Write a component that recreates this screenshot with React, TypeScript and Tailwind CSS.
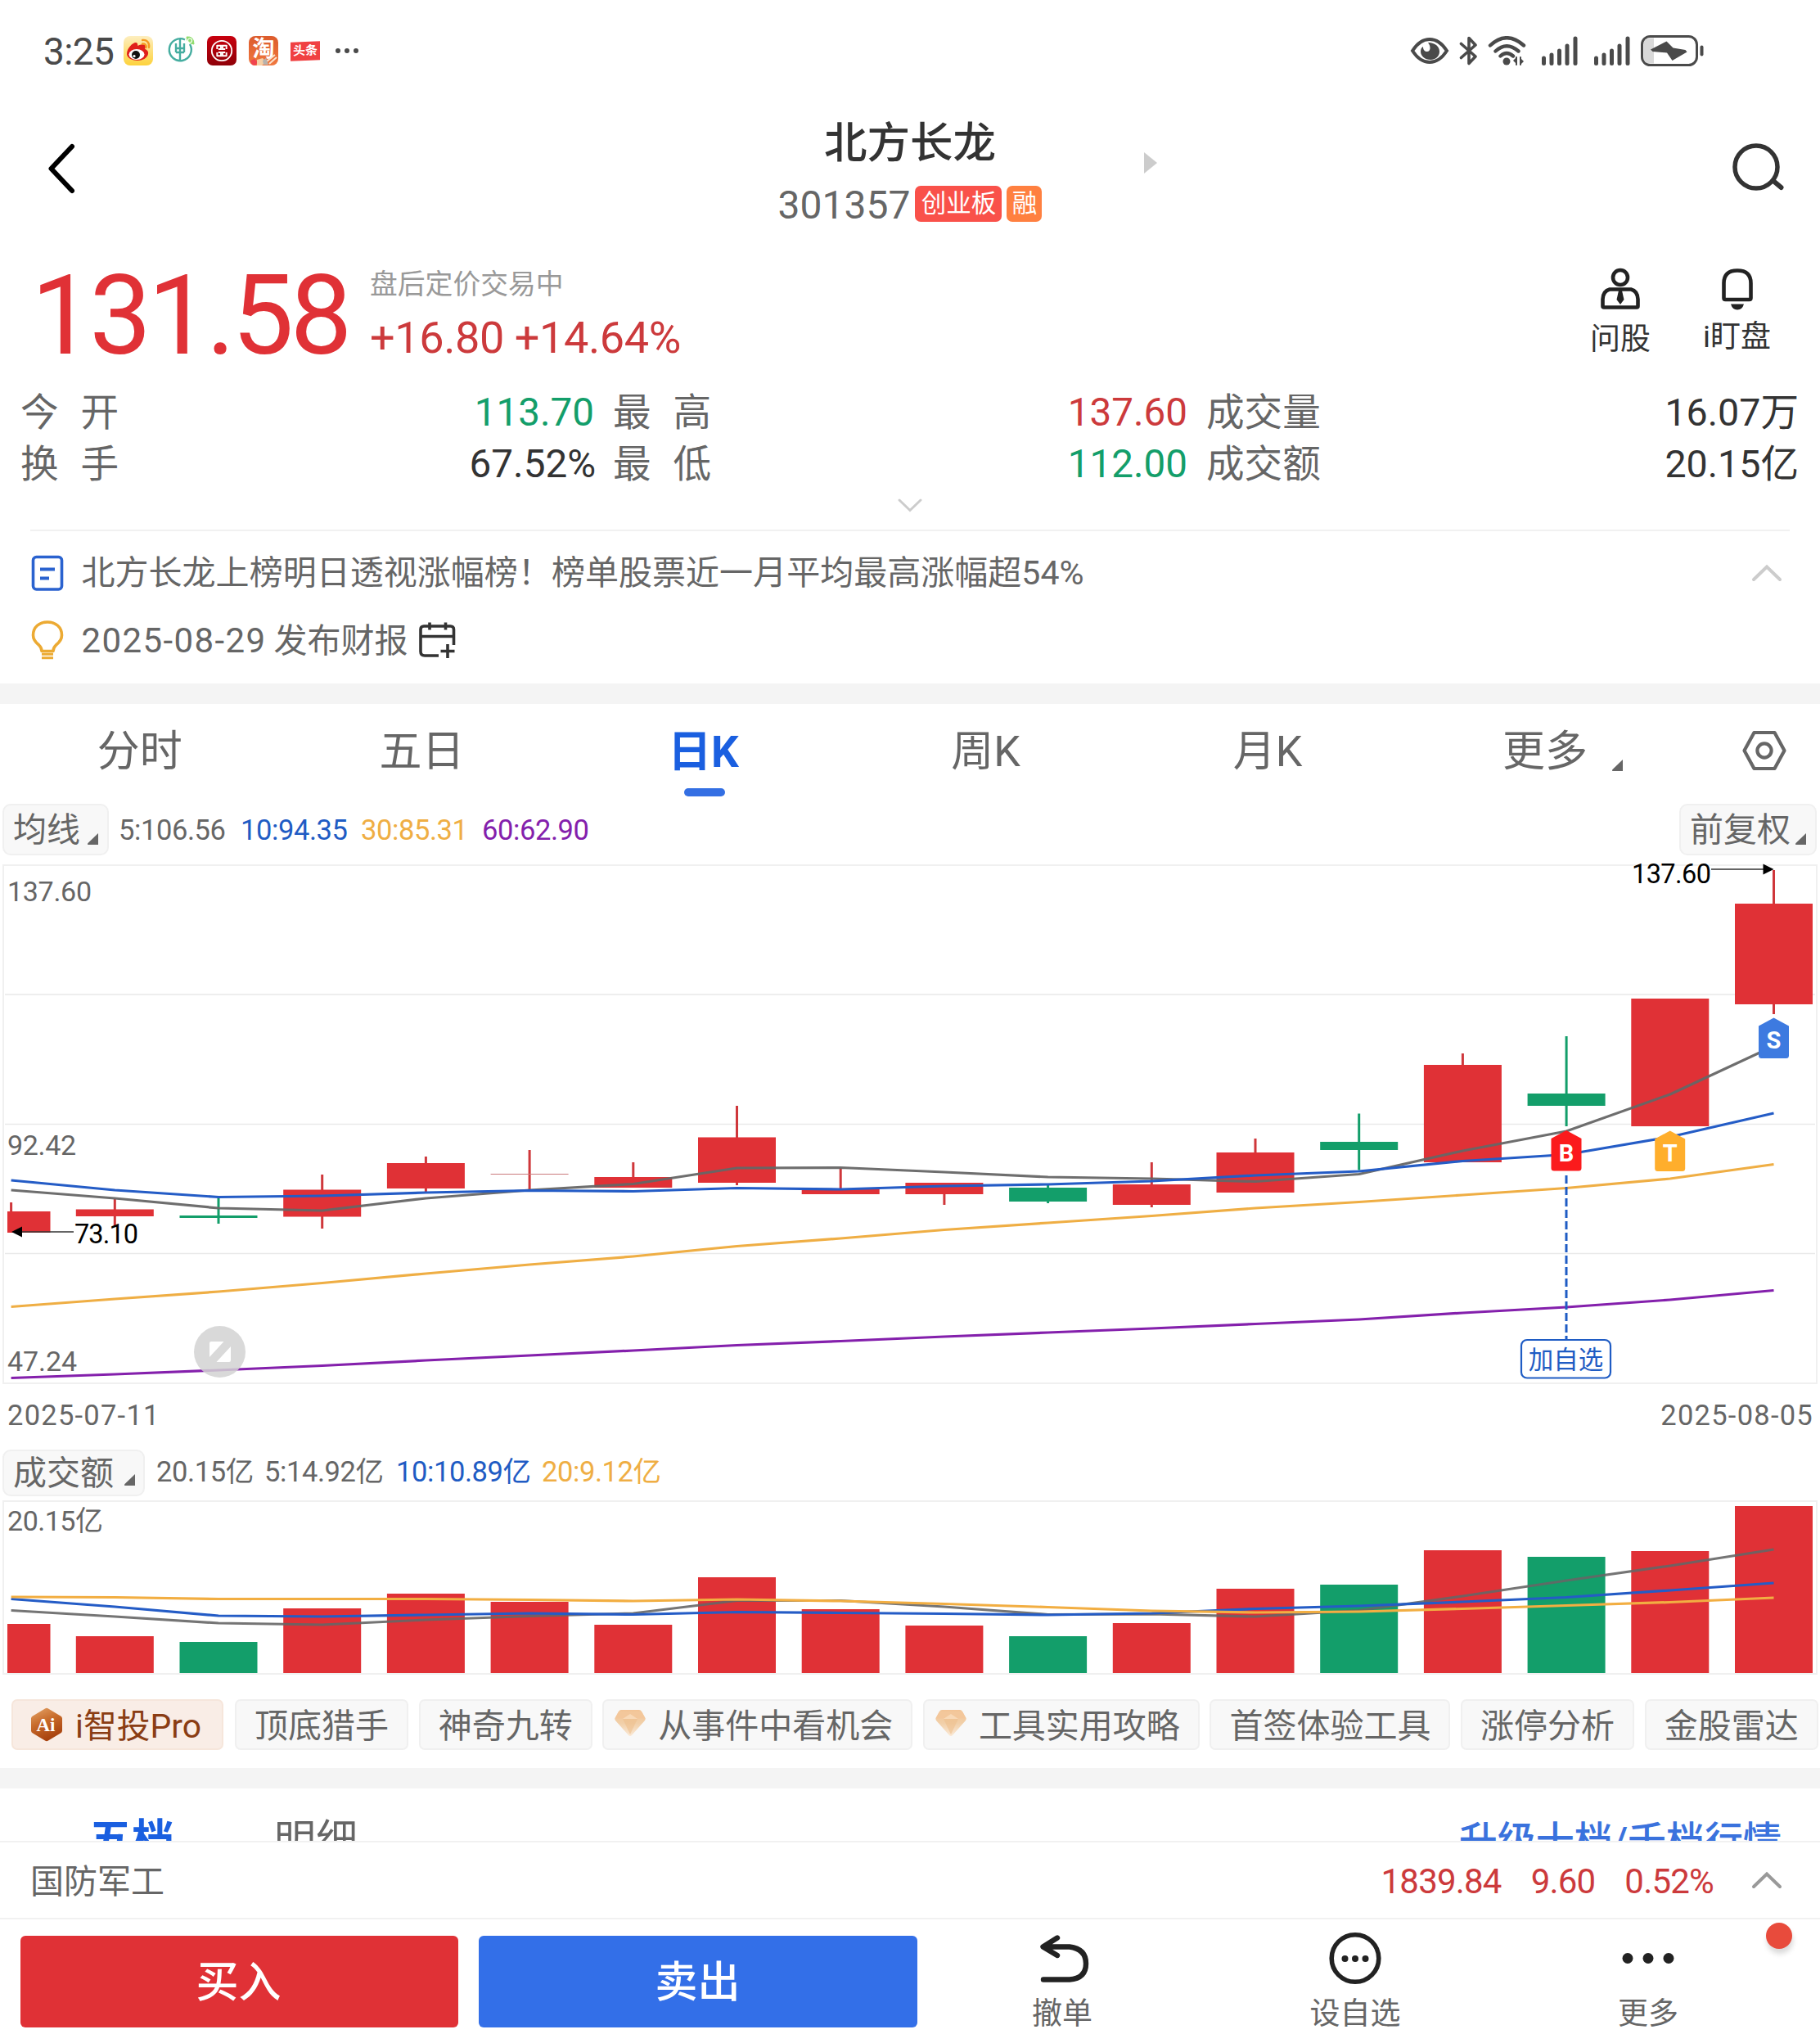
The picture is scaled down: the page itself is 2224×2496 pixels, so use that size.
import React from "react";

const RED = "#e03136";
const GREEN = "#139e6a";
const GRAY = "#666666";
const BLUE = "#1f5cc4";
const AMBER = "#efae44";
const PURPLE = "#8420ac";

const STEP = 126.7;
const cx = (i: number) => 2167.5 - STEP * (17 - i);

type Candle = { up: boolean; high: number; low: number; top: number; bottom: number };

const candles: Candle[] = [
  { up: true, high: 1469, low: 1506, top: 1480, bottom: 1506 },
  { up: true, high: 1465, low: 1497, top: 1477.5, bottom: 1486 },
  { up: false, high: 1463.5, low: 1495, top: 1485, bottom: 1488 },
  { up: true, high: 1435, low: 1501, top: 1453.5, bottom: 1486.5 },
  { up: true, high: 1413, low: 1457, top: 1421, bottom: 1452 },
  { up: true, high: 1405, low: 1454, top: 1434, bottom: 1435 },
  { up: true, high: 1420, low: 1451, top: 1438, bottom: 1451 },
  { up: true, high: 1351, low: 1448, top: 1389.5, bottom: 1445 },
  { up: true, high: 1427, low: 1459, top: 1452, bottom: 1459 },
  { up: true, high: 1445, low: 1472, top: 1445, bottom: 1459 },
  { up: false, high: 1447, low: 1470, top: 1451, bottom: 1468 },
  { up: true, high: 1420, low: 1475, top: 1447, bottom: 1472 },
  { up: true, high: 1391, low: 1457, top: 1408, bottom: 1457 },
  { up: false, high: 1360.5, low: 1429.5, top: 1395, bottom: 1405 },
  { up: true, high: 1287, low: 1420, top: 1301, bottom: 1420 },
  { up: false, high: 1266, low: 1376, top: 1336, bottom: 1351 },
  { up: true, high: 1220, low: 1376, top: 1220, bottom: 1376 },
  { up: true, high: 1063, low: 1239, top: 1104, bottom: 1227 },
];

const ma5 = [1454, 1464, 1476, 1479, 1464, 1454, 1446.5, 1427, 1426.5, 1432, 1438, 1440, 1443.5, 1434.5, 1406, 1382, 1337, 1278];
const ma10 = [1442, 1454, 1462.5, 1461, 1457, 1454.5, 1455.5, 1451.5, 1453, 1449, 1447, 1443, 1436, 1431, 1418.5, 1410.5, 1389, 1360];
const ma30 = [1596.5, 1587, 1578, 1567.5, 1556, 1545, 1535, 1522.5, 1513, 1502.5, 1494, 1485.5, 1476, 1468.5, 1460, 1451.5, 1440, 1422.5];
const ma60 = [1683.5, 1679, 1674, 1668.5, 1662, 1656, 1650, 1643.5, 1638.5, 1633, 1628, 1623, 1617.5, 1612, 1604, 1597, 1588, 1576.5];

const volumes: [number, boolean][] = [
  [1984, true], [1999, true], [2006, false], [1965, true], [1947, true], [1957, true],
  [1985, true], [1927, true], [1966, true], [1986, true], [1999, false], [1983, true],
  [1941, true], [1936, false], [1894, true], [1902, false], [1895, true], [1840, true],
];
const vol5 = [1967.5, 1975, 1983, 1985, 1979, 1974.5, 1971, 1955.5, 1955.5, 1963, 1972.5, 1972, 1975, 1967.5, 1950, 1931, 1913, 1893];
const vol10 = [1953.5, 1963, 1974, 1975, 1973, 1971, 1972.5, 1969.5, 1970.5, 1971.5, 1973, 1971, 1965.5, 1962, 1957, 1951.5, 1943, 1934];
const vol20 = [1951, 1951.5, 1953.5, 1953.5, 1953.5, 1954.5, 1956, 1954, 1956, 1959.5, 1963.5, 1968, 1970, 1969, 1965.5, 1961.5, 1957.5, 1952];

const points = (ys: number[]) => ys.map((y, i) => `${cx(i).toFixed(1)},${y}`).join(" ");

function MaLine({ ys, color }: { ys: number[]; color: string }) {
  return <polyline points={points(ys)} fill="none" stroke={color} strokeWidth="3.2" strokeLinejoin="round" />;
}

function Corner() {
  return (
    <svg className="h-[14px] w-[14px]" viewBox="0 0 14 14">
      <path d="M14 0v14H2.5Q0 14 1.5 12Z" fill="#666" />
    </svg>
  );
}

function Signal() {
  return (
    <svg className="h-[36px] w-[44px]" viewBox="0 0 44 36" stroke="#4a4a4a" strokeWidth="5" strokeLinecap="round">
      <path d="M2.5 27v6.5M12 23v10.5M21.5 18v15.5M31 12v21.5M41 3v30.5" />
    </svg>
  );
}

function StatusBar() {
  return (
    <div className="flex h-[124px] shrink-0 items-center justify-between pl-[53px] pr-[141px]">
      <div className="flex items-center">
        <span className="mt-[2px] w-[98px] text-[46px] leading-none tracking-[-0.6px] text-[#4a4a4a]">3:25</span>
        <svg className="h-[36px] w-[36px]" viewBox="0 0 36 36">
          <defs>
            <linearGradient id="weibo" x1="0" y1="0" x2="0" y2="1">
              <stop offset="0" stopColor="#fdeebf" />
              <stop offset="1" stopColor="#fdd23c" />
            </linearGradient>
          </defs>
          <rect width="36" height="36" rx="8" fill="url(#weibo)" />
          <path d="M4 22C4 15 11 8 15 8c3 0 2 4 2 4s7-3 9-1c2 2 0 5 0 5s5 1 4 6c-1 5-7 8-13 8S4 27 4 22Z" fill="#e0201b" />
          <ellipse cx="16" cy="22.5" rx="9.5" ry="6.5" fill="#fff" />
          <circle cx="15" cy="23" r="5" fill="#111" />
          <circle cx="13" cy="24.5" r="1.6" fill="#fff" />
          <path d="M23 5c5-1 9 3 8 9M23 9.500c3-.5 5 1.500 4.500 4.500" fill="none" stroke="#f59a23" strokeWidth="2.300" strokeLinecap="round" />
        </svg>
        <svg className="ml-[17px] h-[36px] w-[36px]" viewBox="0 0 36 36" fill="none" stroke="#45ada0" strokeWidth="2.400">
          <path d="M22 4.500A13.500 13.500 0 1 0 28 10" />
          <path d="M16 4v10M11 9v11M21 9v11M11 15h10M11 20h10M16 14v17" />
          <path d="M24 1q9-1 9 9-9-1-9-9Z" fill="#8fdc6c" stroke="#8fdc6c" strokeWidth="1" />
          <circle cx="28" cy="5.500" r="2.500" stroke="#fff" strokeWidth="1.200" />
        </svg>
        <svg className="ml-[13px] h-[36px] w-[36px]" viewBox="0 0 36 36" fill="none" stroke="#fff">
          <defs>
            <linearGradient id="icbc" x1="0" y1="0" x2="0" y2="1">
              <stop offset="0" stopColor="#c8000e" />
              <stop offset="1" stopColor="#8f0008" />
            </linearGradient>
          </defs>
          <rect width="36" height="36" rx="7" fill="url(#icbc)" stroke="none" />
          <circle cx="18" cy="18" r="12.200" strokeWidth="1.800" />
          <path d="M12 11.800h5v4.200h-3.200M24 11.800h-5v4.200h3.200M12 24.200h5V20h-3.200M24 24.200h-5V20h3.200M12.300 11v5M23.700 11v5M12.300 20v5M23.700 20v5" strokeWidth="1.900" />
        </svg>
        <span className="ml-[15px] flex h-[36px] w-[36px] items-center justify-center overflow-hidden rounded-[8px] bg-gradient-to-b from-[#dc5b2c] to-[#f0783f]">
          <svg className="h-[36px] w-[36px]" viewBox="0 0 36 36">
            <text x="18" y="25" textAnchor="middle" fontSize="27" fontWeight="700" fill="#fff">淘</text>
            <path d="M2 30l5-2 4 4-3 4H4Z" fill="#f0434e" />
            <path d="M10 29l7-2 4 5-5 4h-6Z" fill="#f6cfa5" />
            <path d="M22 31l10-8M25 34l9-8" stroke="#fbe3cf" strokeWidth="2" />
            <path d="M17 30l4-3 3 8h-6Z" fill="#b7b2ad" />
          </svg>
        </span>
        <span className="ml-[15px] flex h-[23px] w-[36px] -skew-y-2 items-center justify-center bg-[#f04142] text-[15px] font-bold leading-none text-white">
          头条
        </span>
        <span className="ml-[19px] flex gap-[5px]">
          <i className="h-[6px] w-[6px] rounded-full bg-[#4a4a4a]" />
          <i className="h-[6px] w-[6px] rounded-full bg-[#4a4a4a]" />
          <i className="h-[6px] w-[6px] rounded-full bg-[#4a4a4a]" />
        </span>
      </div>
      <div className="flex items-center">
        <svg className="h-[34px] w-[48px]" viewBox="0 0 48 34">
          <path d="M3 17Q12 3 24 3t21 14Q36 31 24 31T3 17Z" fill="none" stroke="#4a4a4a" strokeWidth="4" />
          <path d="M22 7c9 0 14 5 14 11 0 6-5 10-11 10s-12-4-12-10c0-3 1-5 3-6 0 4 2 6 5 6 4 0 5-6 1-11Z" fill="#4a4a4a" />
        </svg>
        <svg className="ml-[12px] h-[36px] w-[24px]" viewBox="0 0 24 36" fill="none" stroke="#4a4a4a" strokeWidth="3.600" strokeLinejoin="round" strokeLinecap="round">
          <path d="M2.500 9.500 20 25l-8 8.500v-31L20 11 2.500 26.500" />
        </svg>
        <svg className="ml-[11px] h-[36px] w-[47px]" viewBox="0 0 47 36" fill="none" stroke="#4a4a4a" strokeWidth="4.400" strokeLinecap="round">
          <path d="M3 11.500Q23 -7 44 11.500M9.500 18.500Q23 6 37.500 18.500M15.500 24.500Q23 17.500 31 24.500" />
          <circle cx="23" cy="31" r="4.500" fill="#4a4a4a" stroke="none" />
          <path d="M35 26v9M40 26v9" strokeWidth="2" />
          <path d="M31 30l4-4v8ZM44 31l-4-4v8Z" fill="#4a4a4a" stroke="none" />
        </svg>
        <span className="ml-[19px] flex"><Signal /></span>
        <span className="ml-[20px] flex"><Signal /></span>
        <svg className="ml-[13px] h-[38px] w-[78px]" viewBox="0 0 78 38">
          <rect x="1.500" y="1.500" width="67" height="35" rx="10" fill="#fff" stroke="#4a4a4a" strokeWidth="3" />
          <path d="M11 3.500h5v31h-5Q3.500 34.500 3.500 27V11Q3.500 3.500 11 3.500Z" fill="#d9d9d9" />
          <path d="M31.500 8 44 15.500 56.500 20.500 38.500 30.500 29.500 22.500 12 18.500Z" fill="none" />
          <path d="M31.500 7.500 12 17.500l2.500 2.500L32 21.500l6.500 9.500 18-10.500-2-2.500-15-2.500Z" fill="#4a4a4a" />
          <path d="M74.500 14.500v9" stroke="#4a4a4a" strokeWidth="4" strokeLinecap="round" />
        </svg>
      </div>
    </div>
  );
}

function Header() {
  return (
    <div className="grid h-[162px] shrink-0 grid-cols-[825px_574px_825px]">
      <div className="flex items-center pl-[56px]">
        <svg className="h-[64px] w-[40px]" viewBox="0 0 40 64" fill="none" stroke="#000" strokeWidth="6" strokeLinecap="round" strokeLinejoin="round">
          <path d="M32 5 6.500 32 32 59" />
        </svg>
      </div>
      <div className="flex flex-col items-center pt-[15px]">
        <div className="h-[72px] text-[52.5px] font-medium leading-[72px] text-[#333]">北方长龙</div>
        <div className="flex h-[76px] items-center">
          <span className="pt-[3px] text-[48px] leading-[76px] text-[#666]">301357</span>
          <span className="ml-[6px] flex h-[44px] w-[106px] items-center justify-center rounded-[7px] bg-[#f9514a] pt-[1px] text-[30.5px] leading-none text-white">创业板</span>
          <span className="ml-[6px] flex h-[44px] w-[43px] items-center justify-center rounded-[7px] bg-[#ff8040] pt-[1px] text-[30.5px] leading-none text-white">融</span>
        </div>
      </div>
      <div className="flex items-center justify-between pr-[41px]">
        <svg className="-ml-px mb-[14px] h-[28px] w-[16px]" viewBox="0 0 16 28"><path d="M0 1v26L16 14Z" fill="#ccc" /></svg>
        <svg className="h-[62px] w-[68px]" viewBox="0 0 68 62" fill="none" stroke="#333" strokeWidth="5.500" strokeLinecap="round">
          <circle cx="31" cy="29" r="26" />
          <path d="m52 46 9.500 8" strokeWidth="6" />
        </svg>
      </div>
    </div>
  );
}

function Price() {
  return (
    <div className="flex h-[186px] shrink-0 pt-[31px]">
      <div className="w-[409px] pl-[38px] pt-[2px] text-[135px] leading-[135px] tracking-[-4.5px] text-[#e03136]">131.58</div>
      <div className="pl-[43px] pt-[4px]">
        <div className="text-[33.8px] leading-[54px] text-[#999]">盘后定价交易中</div>
        <div className="whitespace-nowrap text-[54px] leading-[76px] tracking-[-0.4px] text-[#cc3a3c]">+16.80 +14.64%</div>
      </div>
      <div className="ml-auto flex gap-[64px] pr-[60px] pt-[9px] text-[37px] text-[#333]">
        <div className="flex flex-col items-center">
          <svg className="h-[54px] w-[54px]" viewBox="0 0 54 54" fill="none" stroke="#222" strokeWidth="4.600">
            <circle cx="27" cy="13" r="9" />
            <path d="M14 27.500h26q8 2 8.500 12V48q0 1.500-1.500 1.500H7Q5.500 49.500 5.500 48v-8.500Q6 29.500 14 27.500Z" />
            <path d="M25 29h4l2.500 11-4.500 6-4.500-6Z" fill="#222" stroke="none" />
          </svg>
          <span className="leading-[70px]">问股</span>
        </div>
        <div className="flex flex-col items-center">
          <svg className="h-[54px] w-[54px]" viewBox="0 0 54 54" fill="none" stroke="#222" strokeWidth="4.600">
            <path d="M10.500 38V20Q10.500 4.500 27 4.500T43.500 20V38q0 2-2 2h-29q-2 0-2-2Z" strokeLinejoin="round" />
            <path d="M19 45.500h16q-2 7-8 7t-8-7Z" fill="#222" stroke="none" />
          </svg>
          <span className="leading-[64px]">i盯盘</span>
        </div>
      </div>
    </div>
  );
}

function Stat({ label, value, tone, spaced }: { label: string; value: string; tone: string; spaced?: boolean }) {
  return (
    <div className="flex justify-between text-[46.6px] leading-[64px]">
      <span className={spaced ? "tracking-[27px] text-[#666]" : "text-[#666]"}>{label}</span>
      <span className={tone}>{value}</span>
    </div>
  );
}

function Stats() {
  return (
    <div className="grid h-[126px] shrink-0 auto-rows-[63px] grid-cols-[703px_704px_724px] gap-x-[21px] pl-[25px] text-[#333]">
      <Stat label="今开" value="113.70" tone="text-[#139e6a] text-[47.600px] pr-[2px]" spaced />
      <Stat label="最高" value="137.60" tone="text-[#cc3a3c] text-[47.600px] pr-[2px]" spaced />
      <Stat label="成交量" value="16.07万" tone="text-[#333]" />
      <Stat label="换手" value="67.52%" tone="text-[#333] text-[47.600px]" spaced />
      <Stat label="最低" value="112.00" tone="text-[#139e6a] text-[47.600px] pr-[2px]" spaced />
      <Stat label="成交额" value="20.15亿" tone="text-[#333]" />
    </div>
  );
}

function ChevronUp({ color }: { color: string }) {
  return (
    <svg className="h-[22px] w-[38px]" viewBox="0 0 38 22" fill="none" stroke={color} strokeWidth="4" strokeLinecap="round">
      <path d="M3 19 19 3.500 35 19" />
    </svg>
  );
}

function Notices() {
  return (
    <div className="mx-[37px] h-[188px] shrink-0 border-t-2 border-[#f1f1f1] pt-[10px] text-[41px] leading-[82px] text-[#666]">
      <div className="flex h-[82px] items-center">
        <svg className="ml-[1px] h-[44px] w-[40px]" viewBox="0 0 40 44" fill="none" stroke="#2a62cf" strokeWidth="3.600">
          <rect x="2.500" y="2.500" width="35" height="39.500" rx="4" />
          <path d="M11 17.500h18M11 28.500h11" strokeWidth="4" />
        </svg>
        <span className="ml-[21.500px] whitespace-nowrap tracking-[0.03px]">北方长龙上榜明日透视涨幅榜！榜单股票近一月平均最高涨幅超54%</span>
        <span className="ml-auto mr-[9px] flex"><ChevronUp color="#ccc" /></span>
      </div>
      <div className="flex h-[82px] items-center">
        <svg className="ml-[1px] h-[50px] w-[40px]" viewBox="0 0 40 50" fill="none" stroke="#ecaa33" strokeWidth="3.600">
          <path d="M13 38.500q0-4-3.500-7.500C5 27.500 2.500 24 2.500 19 2.500 9 10 3 20 3s17.500 6 17.500 16c0 5-2.500 8.500-7 12q-3.500 3.500-3.500 7.500Z" strokeLinejoin="round" />
          <path d="M13 42.300h14M13 46.800h14" strokeWidth="3" />
        </svg>
        <span className="ml-[21.500px] w-[235px] pt-[2px] text-[42px] tracking-[1.4px]">2025-08-29</span>
        <span className="pt-[2px]">发布财报</span>
        <svg className="ml-[11px] h-[48px] w-[48px]" viewBox="0 0 48 48" fill="none" stroke="#333" strokeWidth="3.600">
          <path d="M44.500 30V11q0-4-4-4H8Q4 7 4 11v27q0 5 5 5h17M4 19.500h40M15 2.500v9M34.500 2.500v9" />
          <path d="M37 29v17M28.500 37.500h17" />
        </svg>
      </div>
    </div>
  );
}

function Tabs() {
  const tabs = ["分时", "五日", "日K", "周K", "月K"];
  return (
    <div className="flex h-[117px] shrink-0 pt-[19px] text-[52px] leading-[80px] text-[#666]">
      {tabs.map((t) => (
        <div key={t} className="flex w-[344.6px] flex-col items-center">
          <span className={t === "日K" ? "-ml-[4px] text-[53px] font-bold text-[#1a5fe0]" : "-ml-[3px]"}>{t}</span>
          {t === "日K" && <i className="-ml-px mt-[4px] h-[10px] w-[50px] rounded-full bg-[#346fe3]" />}
        </div>
      ))}
      <div className="flex w-[407px] items-start pl-[113px]">
        <span>更多</span>
        <span className="ml-[29px] mt-[49px] flex"><Corner /></span>
      </div>
      <svg className="-ml-px mt-[13px] h-[50px] w-[54px]" viewBox="0 0 54 50" fill="none" stroke="#666" strokeWidth="4.200" strokeLinejoin="round">
        <path d="M14.500 3h25L51.500 25l-12 22h-25L2.500 25Z" />
        <circle cx="27" cy="25" r="8.600" />
      </svg>
    </div>
  );
}

function Marker({ x, y, letter, color }: { x: number; y: number; letter: string; color: string }) {
  return (
    <g>
      <path d={`M${x} ${y}l18.500 10v36q0 3.500-3.500 3.500h-30q-3.500 0-3.500-3.500v-36Z`} fill={color} />
      <text x={x} y={y + 37.5} textAnchor="middle" fontSize="29" fontWeight="700" fill="#fff">{letter}</text>
    </g>
  );
}

function PriceChart() {
  return (
    <svg className="h-[647px] w-full shrink-0" viewBox="0 1045 2224 647">
      <g fill="none" stroke="#f0f0f0" strokeWidth="2">
        <rect x="4" y="1057" width="2216" height="633" />
        <path d="M6 1215h2212M6 1373.500h2212M6 1531.500h2212" stroke="#e9e9e9" strokeWidth="1.300" />
      </g>
      {candles.map((c, i) => {
        const color = c.up ? RED : GREEN;
        const left = i === 0 ? 9 : cx(i) - 47.5;
        const width = i === 0 ? 52.5 : 95;
        return (
          <g key={i}>
            <rect x={cx(i) - 1.5} y={c.high} width="3" height={c.low - c.high} fill={c.up ? "#cf373b" : GREEN} />
            <rect x={left} y={c.top} width={width} height={c.bottom - c.top} fill={i === 5 ? "#cb7b7d" : color} />
          </g>
        );
      })}
      <g opacity="0.95">
        <MaLine ys={ma5} color={GRAY} />
      </g>
      <MaLine ys={ma10} color="#245cc6" />
      <MaLine ys={ma30} color={AMBER} />
      <MaLine ys={ma60} color={PURPLE} />

      <circle cx="268.500" cy="1651.500" r="31.500" fill="#d2d2d2" fillOpacity="0.850" />
      <path d="M256 1641q0-2 2-2h15.500L256 1658ZM282 1645v17q0 2-2 2h-15.500Z" fill="#fff" />

      <path d="M1914 1436v201" stroke={BLUE} strokeWidth="3" strokeDasharray="10 4" />
      <rect x="1859" y="1637" width="109" height="46.500" rx="7" fill="#fff" stroke={BLUE} strokeWidth="2.200" />
      <text x="1913.500" y="1671.500" textAnchor="middle" fontSize="30.500" fill={BLUE}>加自选</text>

      <Marker x={1914} y={1381} letter="B" color="#fb1a1c" />
      <Marker x={2040.7} y={1381.5} letter="T" color="#ffae2c" />
      <Marker x={2167.5} y={1243.5} letter="S" color="#3d7ae0" />

      <g fontSize="34" fill={GRAY}>
        <text x="9" y="1101" textLength="103">137.60</text>
        <text x="9" y="1411" textLength="84">92.42</text>
        <text x="9" y="1675" textLength="85">47.24</text>
      </g>
      <g fontSize="32.500" fill="#000">
        <text x="91" y="1519" textLength="78">73.10</text>
        <text x="1994" y="1078.500" textLength="97">137.60</text>
      </g>
      <path d="M20 1505h70M2091 1062h68" stroke="#333" strokeWidth="1.500" />
      <path d="M14 1505l13-6.500v13ZM2167.500 1062l-13-6.500v13Z" fill="#000" />
    </svg>
  );
}

function VolumeChart() {
  return (
    <svg className="h-[222px] w-full shrink-0" viewBox="0 1828 2224 222">
      <rect x="4" y="1834" width="2216" height="211" fill="none" stroke="#f0f0f0" strokeWidth="2" />
      {volumes.map(([top, up], i) => (
        <rect key={i} x={i === 0 ? 9 : cx(i) - 47.5} y={top} width={i === 0 ? 52.5 : 95} height={2044 - top} fill={up ? RED : GREEN} />
      ))}
      <g opacity="0.9">
        <MaLine ys={vol5} color={GRAY} />
      </g>
      <MaLine ys={vol10} color="#245cc6" />
      <MaLine ys={vol20} color="#f2ae42" />
      <text x="9" y="1870" fontSize="34" fill={GRAY} textLength="117">20.15亿</text>
    </svg>
  );
}

function Diamond() {
  return (
    <svg className="h-[34px] w-[38px]" viewBox="0 0 38 34">
      <defs>
        <linearGradient id="gem" x1="0" y1="0" x2="0" y2="1">
          <stop offset="0" stopColor="#f3c495" />
          <stop offset="0.500" stopColor="#f1cfa8" />
          <stop offset="1" stopColor="#fae9d6" />
        </linearGradient>
      </defs>
      <path d="M8 1h22q2 0 3 2l4.500 8q.5 1.500-.5 3L21 32q-2 2-4 0L1 14q-1-1.500-.5-3L5 3q1-2 3-2Z" fill="url(#gem)" />
      <path d="M5 3 0.500 11.500h37L33 3Z" fill="#f3c79b" />
      <path d="M10 12h18L19 31Z" fill="#eebf8d" opacity="0.600" />
      <path d="M10 12 19 6l9 6Z" fill="#fbe4ca" opacity="0.600" />
    </svg>
  );
}

function Chip({ children, gem }: { children: string; gem?: boolean }) {
  return (
    <div className={`flex h-[62px] shrink-0 items-center rounded-[7px] border-2 border-[#f0f0f0] bg-[#f8f8f8] pr-[22px] ${gem ? "pl-[13px]" : "pl-[22px]"}`}>
      {gem && <span className="-mt-[4px] mr-[15px] flex"><Diamond /></span>}
      <span className="pt-[3px]">{children}</span>
    </div>
  );
}

function Chips() {
  return (
    <div className="mt-[26px] flex h-[62px] shrink-0 gap-[12.6px] overflow-hidden whitespace-nowrap pl-[14px] text-[41px] leading-[58px] text-[#666]">
      <div className="mr-[1.500px] flex w-[259px] shrink-0 items-center rounded-[7px] border-2 border-[#f6e6db] bg-[#f9ede6] pl-[21px] text-[40.800px] text-[#8a3d14]">
        <svg className="mr-[15px] h-[42px] w-[40px]" viewBox="0 0 40 42">
          <defs>
            <linearGradient id="ai" x1="0" y1="0" x2="0.400" y2="1">
              <stop offset="0" stopColor="#e5a468" />
              <stop offset="0.500" stopColor="#c76a2a" />
              <stop offset="1" stopColor="#a8430f" />
            </linearGradient>
          </defs>
          <path d="M18 1.500q2-1.500 4 0l15 9q2 1 2 3v15q0 2-2 3l-15 9q-2 1.500-4 0l-15-9q-2-1-2-3v-15q0-2 2-3Z" fill="url(#ai)" />
          <text x="19" y="28.500" textAnchor="middle" fontSize="23" fontWeight="700" fill="#fff" className="font-['Liberation_Serif',serif]">Ai</text>
        </svg>
        <span className="pt-[3px]">i智投Pro</span>
      </div>
      <Chip>顶底猎手</Chip>
      <Chip>神奇九转</Chip>
      <Chip gem>从事件中看机会</Chip>
      <Chip gem>工具实用攻略</Chip>
      <Chip>首签体验工具</Chip>
      <Chip>涨停分析</Chip>
      <Chip>金股雷达</Chip>
    </div>
  );
}

function BottomBar() {
  return (
    <div className="flex h-[151px] shrink-0 pl-[25px] pt-[20px]">
      <div className="h-[112px] w-[535px] rounded-[6px] bg-[#e03136] pr-[2px] text-center text-[52px] font-medium leading-[115px] text-white">买入</div>
      <div className="ml-[25px] h-[112px] w-[536px] rounded-[6px] bg-[#336fe8] pr-[1px] text-center text-[52px] font-medium leading-[115px] text-white">卖出</div>
      <div className="-mt-[20px] ml-[-2px] grid w-[1074px] grid-cols-3 pt-[14px] text-[37px] leading-[69px] text-[#666]">
        <div className="flex flex-col items-center">
          <svg className="h-[67px] w-[68px]" viewBox="0 0 68 67" fill="none" stroke="#222" strokeWidth="6.400" strokeLinecap="round" strokeLinejoin="round">
            <path d="M28 8.500 10.500 19.500 28 30M11 19.500h32Q63 22 63 40T43 59.500H11" />
          </svg>
          <span>撤单</span>
        </div>
        <div className="flex flex-col items-center">
          <svg className="h-[67px] w-[68px]" viewBox="0 0 68 67" fill="#222">
            <circle cx="34" cy="33.500" r="28.800" fill="none" stroke="#222" strokeWidth="5.600" />
            <circle cx="21.500" cy="34" r="4" />
            <circle cx="34" cy="34" r="4" />
            <circle cx="46.500" cy="34" r="4" />
          </svg>
          <span>设自选</span>
        </div>
        <div className="relative flex flex-col items-center">
          <svg className="h-[67px] w-[68px]" viewBox="0 0 68 67" fill="#222">
            <circle cx="9" cy="33.500" r="6.500" />
            <circle cx="34" cy="33.500" r="6.500" />
            <circle cx="59" cy="33.500" r="6.500" />
          </svg>
          <span>更多</span>
          <i className="absolute -top-[10px] right-[3px] h-[32px] w-[32px] rounded-full bg-[#e84b3c] shadow-[1px_6px_6px_rgba(0,0,0,0.15)]" />
        </div>
      </div>
    </div>
  );
}

export default function App() {
  return (
    <div className="flex h-[2496px] w-[2224px] flex-col overflow-hidden bg-white font-['Roboto','Noto_Sans_CJK_SC',sans-serif]">
      <StatusBar />
      <Header />
      <Price />
      <Stats />
      <div className="flex h-[49px] shrink-0 justify-center pt-[9px]">
        <svg className="h-[20px] w-[32px]" viewBox="0 0 32 20" fill="none" stroke="#ccc" strokeWidth="3" strokeLinecap="round">
          <path d="M3 4 16 16.500 29 4" />
        </svg>
      </div>
      <Notices />
      <div className="h-[25px] shrink-0 bg-[#f4f4f4]" />
      <Tabs />

      <div className="mt-[5px] flex h-[63px] shrink-0 items-center justify-between pl-[3px] pr-[4px]">
        <div className="flex items-center text-[34.5px] tracking-[-0.4px]">
          <div className="flex h-[63px] w-[130px] items-center rounded-[10px] border-2 border-[#f0f0f0] bg-[#f8f8f8] pl-[11px] text-[41px] tracking-normal text-[#666]">
            <span className="pt-[3px]">均线</span>
            <span className="ml-[8px] mt-[22px] flex"><Corner /></span>
          </div>
          <span className="ml-[12px] w-[149px] pt-[3px] text-[#666]">5:106.56</span>
          <span className="w-[147px] pt-[3px] text-[#1f5cc4]">10:94.35</span>
          <span className="w-[148px] pt-[3px] text-[#efae44]">30:85.31</span>
          <span className="pt-[3px] text-[#8420ac]">60:62.90</span>
        </div>
        <div className="flex h-[63px] w-[168px] items-center rounded-[10px] border-2 border-[#f0f0f0] bg-[#f8f8f8] pl-[11px] text-[41px] text-[#666]">
          <span className="pt-[3px]">前复权</span>
          <span className="ml-[5px] mt-[22px] flex"><Corner /></span>
        </div>
      </div>

      <PriceChart />
      <div className="flex h-[73px] shrink-0 items-center justify-between pl-[9px] pr-[8px] pt-[2px] text-[34.5px] tracking-[1.25px] text-[#666]">
        <span>2025-07-11</span>
        <span>2025-08-05</span>
      </div>

      <div className="mt-[6px] flex h-[57px] shrink-0 items-center pl-[3px] text-[34.5px] tracking-[-0.4px]">
        <div className="flex h-[57px] w-[174px] items-center rounded-[10px] border-2 border-[#f0f0f0] bg-[#f8f8f8] pl-[11px] text-[41px] tracking-normal text-[#666]">
          <span className="pt-[3px]">成交额</span>
          <span className="ml-[12px] mt-[16px] flex"><Corner /></span>
        </div>
        <span className="-mt-px ml-[14px] w-[132px] text-[#666]">20.15亿</span>
        <span className="-mt-px w-[161px] text-[#666]">5:14.92亿</span>
        <span className="-mt-px w-[178px] text-[#1f5cc4]">10:10.89亿</span>
        <span className="-mt-px text-[#efae44]">20:9.12亿</span>
      </div>
      <VolumeChart />
      <Chips />
      <div className="mt-[22px] h-[25px] shrink-0 bg-[#f4f4f4]" />

      <div className="flex h-[64px] shrink-0 items-start overflow-hidden pl-[109px] pr-[47px] pt-[34px] text-[52px] leading-[60px]">
        <span className="font-bold text-[#1a5fe0]">五档</span>
        <span className="ml-[122px] text-[51px] text-[#666]">明细</span>
        <span className="ml-auto text-[47px] font-medium text-[#3a72dd]">升级十档/千档行情</span>
      </div>
      <div className="flex h-[96px] shrink-0 items-center border-y-2 border-[#f1f1f1] pl-[37px] pr-[46px] text-[41px] text-[#666]">
        <span className="pt-[5px]">国防军工</span>
        <span className="ml-auto flex gap-[36px] pt-[3px] text-[42px] tracking-[-0.8px] text-[#cc3a3c]">
          <span>1839.84</span>
          <span>9.60</span>
          <span>0.52%</span>
        </span>
        <span className="ml-[46px] flex"><ChevronUp color="#999" /></span>
      </div>
      <BottomBar />
    </div>
  );
}
